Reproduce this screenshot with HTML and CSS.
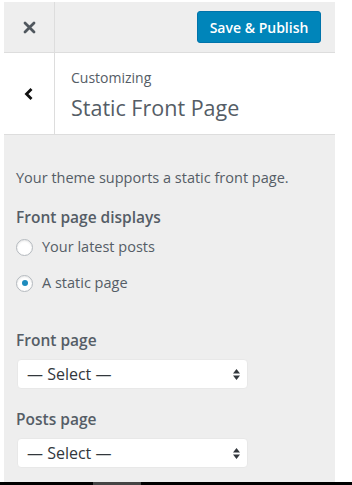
FILE: index.html
```html
<!DOCTYPE html>
<html lang="en-us">

<head>
<title>Static Front Page</title>
<meta charset="utf-8" />
<meta name="viewport" content="width=device-width, initial-scale=1.0">

<link rel="stylesheet" href="styles.css">
</head>

<body>
<div class="panel">
  <div class="topbar">
    <div class="close">
      <svg width="13" height="13" viewBox="0 0 13 13"><path d="M2 2 L11 11 M11 2 L2 11" stroke="#50575e" stroke-width="2.8" stroke-linecap="round"/></svg>
    </div>
    <button class="publish">Save &amp; Publish</button>
  </div>

  <div class="title-row">
    <div class="back">
      <svg width="10" height="14" viewBox="0 0 10 14"><path d="M7.5 2 L2.5 7 L7.5 12" fill="none" stroke="#111" stroke-width="2.8"/></svg>
    </div>
    <div class="title">
      <span class="crumb">Customizing</span>
      <h1>Static Front Page</h1>
    </div>
  </div>

  <div class="content">
    <p class="desc">Your theme supports a static front page.</p>

    <div class="field">
      <span class="label">Front page displays</span>
      <label class="radio"><span class="dot"></span>Your latest posts</label>
      <label class="radio"><span class="dot on"></span>A static page</label>
    </div>

    <div class="field drop">
      <span class="label">Front page</span>
      <div class="select">
        <span>&mdash; Select &mdash;</span>
        <svg width="7" height="11" viewBox="0 0 7 11"><path d="M3.5 0 L7 4.5 L0 4.5 Z M0 6.5 L7 6.5 L3.5 11 Z" fill="#32373c"/></svg>
      </div>
    </div>

    <div class="field drop">
      <span class="label">Posts page</span>
      <div class="select">
        <span>&mdash; Select &mdash;</span>
        <svg width="7" height="11" viewBox="0 0 7 11"><path d="M3.5 0 L7 4.5 L0 4.5 Z M0 6.5 L7 6.5 L3.5 11 Z" fill="#32373c"/></svg>
      </div>
    </div>
  </div>
</div>
<div class="edge"><div class="thumb"></div></div>
</body>

</html>
```

FILE: styles.css
```css
body {
  margin: 0;
  background-color: white;
  font-family: "Open Sans", Arial, sans-serif;
  color: #555d66;
  overflow: hidden;
}

.panel {
  margin: 2px 0 0 4px;
  width: 331px;
  background-color: #eee;
}

.topbar {
  display: flex;
  align-items: center;
  height: 50px;
  border-bottom: 1px solid #ddd;
}

.close {
  width: 50px;
  height: 100%;
  border-right: 1px solid #ddd;
  display: flex;
  align-items: center;
  justify-content: center;
}

.publish {
  margin-left: auto;
  margin-right: 14px;
  width: 124px;
  height: 32px;
  background-color: #0085ba;
  border: 1px solid #0073aa;
  border-radius: 3px;
  color: white;
  font-family: "Open Sans", Arial, sans-serif;
  font-size: 14px;
  font-weight: 600;
  padding: 0;
}

.title-row {
  display: flex;
  height: 81px;
  background-color: white;
  border-bottom: 1px solid #ddd;
}

.back {
  width: 50px;
  border-right: 1px solid #ddd;
  display: flex;
  align-items: center;
  justify-content: center;
}

.title {
  padding: 15px 0 0 16px;
}

.crumb {
  display: block;
  font-size: 14px;
  line-height: 20px;
}

h1 {
  margin: 6px 0 0;
  font-size: 21.5px;
  font-weight: normal;
  line-height: 28px;
}

.content {
  height: 347px;
  box-sizing: border-box;
  padding: 33px 12px 0;
}

.desc {
  margin: 0 0 18px;
  font-size: 14.5px;
  line-height: 20px;
}

.field {
  display: flex;
  flex-direction: column;
}

.label {
  font-size: 15.5px;
  font-weight: 600;
  line-height: 22px;
  margin-bottom: 9px;
}

.radio {
  display: flex;
  align-items: center;
  font-size: 14.5px;
  line-height: 20px;
  margin-bottom: 16px;
}

.dot {
  width: 17px;
  height: 17px;
  border: 1px solid #b4b9be;
  border-radius: 50%;
  background-color: white;
  box-shadow: inset 0 1px 2px rgba(0,0,0,0.1);
  margin-right: 9px;
  display: flex;
  align-items: center;
  justify-content: center;
  box-sizing: border-box;
}

.dot.on::after {
  content: "";
  width: 6px;
  height: 6px;
  border-radius: 50%;
  background-color: #1e8cbe;
}

.drop {
  margin-top: 20px;
}

.drop .label {
  margin-bottom: 8px;
}

.drop + .drop {
  margin-top: 19px;
}

.select {
  width: 231px;
  height: 30px;
  margin-left: 1px;
  box-sizing: border-box;
  background-color: white;
  border: 1px solid #e8e8e8;
  border-radius: 4px;
  display: flex;
  align-items: center;
  justify-content: space-between;
  padding: 0 7px 0 9px;
  font-size: 16px;
  color: #32373c;
}

.edge {
  height: 3px;
  background-color: black;
}

.thumb {
  margin-left: 93px;
  width: 48px;
  height: 3px;
  background-color: #444;
}
```
